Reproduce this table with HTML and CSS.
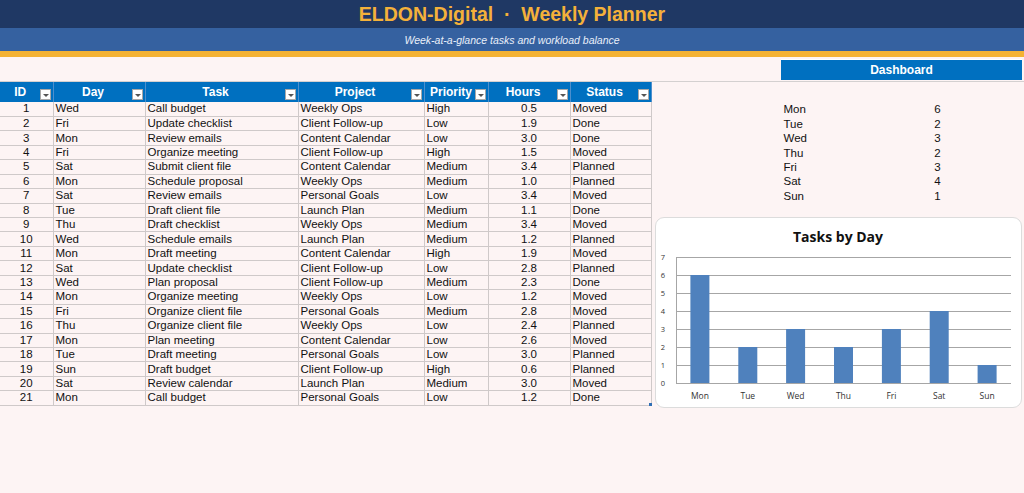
FILE: index.html
```html
<!DOCTYPE html>
<html lang="en">
<head>
<meta charset="utf-8">
<title>ELDON-Digital · Weekly Planner</title>
<link rel="stylesheet" href="styles.css">
</head>
<body>
<header class="title-bar"><h1>ELDON-Digital &nbsp;·&nbsp; Weekly Planner</h1></header>
<div class="subtitle-bar">Week-at-a-glance tasks and workload balance</div>
<div class="accent-stripe"></div>
<div class="toolbar"><button class="dash-btn">Dashboard</button></div>
<main class="main">
  <table class="planner">
    <colgroup>
      <col class="c-id"><col class="c-day"><col class="c-task"><col class="c-proj"><col class="c-pri"><col class="c-hrs"><col class="c-status">
    </colgroup>
    <thead>
      <tr>
        <th>ID<span class="flt"></span></th>
        <th>Day<span class="flt"></span></th>
        <th>Task<span class="flt"></span></th>
        <th>Project<span class="flt"></span></th>
        <th class="th-pri">Priority<span class="flt"></span></th>
        <th>Hours<span class="flt"></span></th>
        <th>Status<span class="flt"></span></th>
      </tr>
    </thead>
    <tbody>
      <tr><td class="num">1</td><td>Wed</td><td>Call budget</td><td>Weekly Ops</td><td>High</td><td class="num">0.5</td><td>Moved</td></tr>
      <tr><td class="num">2</td><td>Fri</td><td>Update checklist</td><td>Client Follow-up</td><td>Low</td><td class="num">1.9</td><td>Done</td></tr>
      <tr><td class="num">3</td><td>Mon</td><td>Review emails</td><td>Content Calendar</td><td>Low</td><td class="num">3.0</td><td>Done</td></tr>
      <tr><td class="num">4</td><td>Fri</td><td>Organize meeting</td><td>Client Follow-up</td><td>High</td><td class="num">1.5</td><td>Moved</td></tr>
      <tr><td class="num">5</td><td>Sat</td><td>Submit client file</td><td>Content Calendar</td><td>Medium</td><td class="num">3.4</td><td>Planned</td></tr>
      <tr><td class="num">6</td><td>Mon</td><td>Schedule proposal</td><td>Weekly Ops</td><td>Medium</td><td class="num">1.0</td><td>Planned</td></tr>
      <tr><td class="num">7</td><td>Sat</td><td>Review emails</td><td>Personal Goals</td><td>Low</td><td class="num">3.4</td><td>Moved</td></tr>
      <tr><td class="num">8</td><td>Tue</td><td>Draft client file</td><td>Launch Plan</td><td>Medium</td><td class="num">1.1</td><td>Done</td></tr>
      <tr><td class="num">9</td><td>Thu</td><td>Draft checklist</td><td>Weekly Ops</td><td>Medium</td><td class="num">3.4</td><td>Moved</td></tr>
      <tr><td class="num">10</td><td>Wed</td><td>Schedule emails</td><td>Launch Plan</td><td>Medium</td><td class="num">1.2</td><td>Planned</td></tr>
      <tr><td class="num">11</td><td>Mon</td><td>Draft meeting</td><td>Content Calendar</td><td>High</td><td class="num">1.9</td><td>Moved</td></tr>
      <tr><td class="num">12</td><td>Sat</td><td>Update checklist</td><td>Client Follow-up</td><td>Low</td><td class="num">2.8</td><td>Planned</td></tr>
      <tr><td class="num">13</td><td>Wed</td><td>Plan proposal</td><td>Client Follow-up</td><td>Medium</td><td class="num">2.3</td><td>Done</td></tr>
      <tr><td class="num">14</td><td>Mon</td><td>Organize meeting</td><td>Weekly Ops</td><td>Low</td><td class="num">1.2</td><td>Moved</td></tr>
      <tr><td class="num">15</td><td>Fri</td><td>Organize client file</td><td>Personal Goals</td><td>Medium</td><td class="num">2.8</td><td>Moved</td></tr>
      <tr><td class="num">16</td><td>Thu</td><td>Organize client file</td><td>Weekly Ops</td><td>Low</td><td class="num">2.4</td><td>Planned</td></tr>
      <tr><td class="num">17</td><td>Mon</td><td>Plan meeting</td><td>Content Calendar</td><td>Low</td><td class="num">2.6</td><td>Moved</td></tr>
      <tr><td class="num">18</td><td>Tue</td><td>Draft meeting</td><td>Personal Goals</td><td>Low</td><td class="num">3.0</td><td>Planned</td></tr>
      <tr><td class="num">19</td><td>Sun</td><td>Draft budget</td><td>Client Follow-up</td><td>High</td><td class="num">0.6</td><td>Planned</td></tr>
      <tr><td class="num">20</td><td>Sat</td><td>Review calendar</td><td>Launch Plan</td><td>Medium</td><td class="num">3.0</td><td>Moved</td></tr>
      <tr class="last"><td class="num">21</td><td>Mon</td><td>Call budget</td><td>Personal Goals</td><td>Low</td><td class="num">1.2</td><td>Done<span class="handle"></span></td></tr>
    </tbody>
  </table>

  <aside class="side">
    <div class="summary">
      <div class="srow"><span class="sday">Mon</span><span class="sval">6</span></div>
      <div class="srow"><span class="sday">Tue</span><span class="sval">2</span></div>
      <div class="srow"><span class="sday">Wed</span><span class="sval">3</span></div>
      <div class="srow"><span class="sday">Thu</span><span class="sval">2</span></div>
      <div class="srow"><span class="sday">Fri</span><span class="sval">3</span></div>
      <div class="srow"><span class="sday">Sat</span><span class="sval">4</span></div>
      <div class="srow"><span class="sday">Sun</span><span class="sval">1</span></div>
    </div>
    <div class="chart-card">
      <svg class="chart" width="367" height="191" viewBox="0 0 367 191">
        <text x="183" y="25" class="ch-title" text-anchor="middle">Tasks by Day</text>
        <g class="grid">
          <line x1="21" y1="40" x2="356" y2="40"/>
          <line x1="21" y1="58" x2="356" y2="58"/>
          <line x1="21" y1="76" x2="356" y2="76"/>
          <line x1="21" y1="94" x2="356" y2="94"/>
          <line x1="21" y1="112" x2="356" y2="112"/>
          <line x1="21" y1="130" x2="356" y2="130"/>
          <line x1="21" y1="148" x2="356" y2="148"/>
          <line x1="21" y1="166" x2="356" y2="166"/>
          <line x1="21" y1="40" x2="21" y2="166"/>
        </g>
        <g class="ylab" text-anchor="middle">
          <text x="8" y="43">7</text>
          <text x="8" y="61">6</text>
          <text x="8" y="79">5</text>
          <text x="8" y="97">4</text>
          <text x="8" y="115">3</text>
          <text x="8" y="133">2</text>
          <text x="8" y="151">1</text>
          <text x="8" y="169">0</text>
        </g>
        <g class="bars">
          <rect x="35.4" y="58" width="19" height="108"/>
          <rect x="83.3" y="130" width="19" height="36"/>
          <rect x="131.1" y="112" width="19" height="54"/>
          <rect x="179" y="130" width="19" height="36"/>
          <rect x="226.9" y="112" width="19" height="54"/>
          <rect x="274.7" y="94" width="19" height="72"/>
          <rect x="322.6" y="148" width="19" height="18"/>
        </g>
        <g class="xlab" text-anchor="middle">
          <text x="44.9" y="182">Mon</text>
          <text x="92.8" y="182">Tue</text>
          <text x="140.6" y="182">Wed</text>
          <text x="188.5" y="182">Thu</text>
          <text x="236.4" y="182">Fri</text>
          <text x="284.2" y="182">Sat</text>
          <text x="332.1" y="182">Sun</text>
        </g>
      </svg>
    </div>
  </aside>
</main>
</body>
</html>
```

FILE: styles.css
```css
* { box-sizing: border-box; }
html, body { margin: 0; padding: 0; }
body {
  width: 1024px;
  height: 493px;
  overflow: hidden;
  background: #fdf4f4;
  font-family: "Liberation Sans", Arial, sans-serif;
  color: #111;
}
.title-bar {
  height: 28px;
  background: #1f3864;
  display: flex;
  align-items: center;
  justify-content: center;
}
.title-bar h1 {
  margin: 0;
  font-size: 19.5px;
  font-weight: bold;
  color: #f4b13a;
  letter-spacing: 0;
}
.subtitle-bar {
  height: 23px;
  background: #3561a0;
  color: #e8eef8;
  font-style: italic;
  font-size: 10.5px;
  display: flex;
  align-items: center;
  justify-content: center;
}
.accent-stripe {
  height: 6px;
  background: #f4b233;
}
.toolbar {
  height: 25px;
  display: flex;
  justify-content: flex-end;
  align-items: flex-start;
  padding-top: 2px;
  padding-right: 2px;
  border-bottom: 1px solid #d4d0d0;
}
.dash-btn {
  width: 241px;
  height: 21px;
  background: #0070c0;
  color: #fff;
  border: none;
  border-top: 1px solid #fff;
  font-family: "Liberation Sans", Arial, sans-serif;
  font-weight: bold;
  font-size: 12px;
  padding: 0;
}
.main {
  display: flex;
  align-items: flex-start;
}
.planner {
  border-collapse: collapse;
  table-layout: fixed;
  width: 651px;
  font-size: 11.5px;
}
.c-id { width: 53px; }
.c-day { width: 92px; }
.c-task { width: 153px; }
.c-proj { width: 126px; }
.c-pri { width: 64px; }
.c-hrs { width: 82px; }
.c-status { width: 81px; }
.planner th {
  position: relative;
  height: 20px;
  background: #0070c0;
  color: #fff;
  font-size: 12px;
  font-weight: bold;
  text-align: center;
  padding: 0 12px 1px 0;
  border-right: 1px solid #4d8fcd;
  white-space: nowrap;
}
.planner th.th-pri { padding-right: 10px; }
.flt {
  position: absolute;
  right: 2px;
  bottom: 2px;
  width: 11px;
  height: 11px;
  background: #fff;
  border: 1px solid #a8a8a8;
}
.flt::after {
  content: "";
  position: absolute;
  left: 2px;
  top: 4px;
  border-left: 3px solid transparent;
  border-right: 3px solid transparent;
  border-top: 3px solid #555;
}
.planner td {
  height: 14.45px;
  padding: 0 2px;
  line-height: 13px;
  border: 1px solid #cfc9c9;
  border-top: none;
  background: #fdf4f4;
  white-space: nowrap;
  overflow: hidden;
}
.planner td:first-child { border-left: none; }
.planner td.num { text-align: center; }
.planner tr.last td:last-child { position: relative; overflow: visible; }
.handle {
  position: absolute;
  right: -1px;
  bottom: -1px;
  width: 3px;
  height: 3px;
  background: #2f6fb5;
}
.side {
  flex: 1;
  display: flex;
  flex-direction: column;
  padding-top: 20px;
}
.summary {
  display: flex;
  flex-direction: column;
  padding-left: 132px;
  font-size: 11.5px;
}
.srow {
  display: flex;
  height: 14.45px;
  align-items: center;
}
.sday { width: 146px; }
.sval { width: 16px; text-align: center; }
.chart-card {
  margin: 14px 3px 0 3px;
  width: 367px;
  height: 191px;
  background: #fff;
  border: 1px solid #dcdcdc;
  border-radius: 9px;
  overflow: hidden;
}
.chart { display: block; margin: -1px; }
.ch-title {
  font-family: "Open Sans", "Liberation Sans", sans-serif;
  font-weight: bold;
  font-size: 14px;
  fill: #111;
}
.grid line { stroke: #a6a6a6; stroke-width: 1; shape-rendering: crispEdges; }
.ylab text, .xlab text {
  font-family: "Open Sans", "Liberation Sans", sans-serif;
  font-size: 7.5px;
  fill: #333;
}
.xlab text { font-size: 8.5px; }
.bars rect { fill: #4f81bd; }
```
